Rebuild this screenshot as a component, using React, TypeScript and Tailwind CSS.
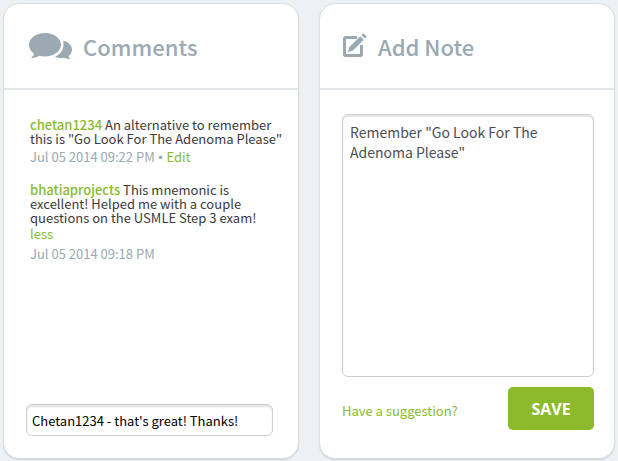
import type { ReactNode } from "react";

type Comment = {
  author: string;
  body: string;
  date: string;
  expanded?: boolean;
  editable?: boolean;
};

const comments: Comment[] = [
  {
    author: "chetan1234",
    body: 'An alternative to remember this is "Go Look For The Adenoma Please"',
    date: "Jul 05 2014 09:22 PM",
    editable: true,
  },
  {
    author: "bhatiaprojects",
    body: "This mnemonic is excellent! Helped me with a couple questions on the USMLE Step 3 exam!",
    date: "Jul 05 2014 09:18 PM",
    expanded: true,
  },
];

function CommentsIcon() {
  return (
    <svg viewBox="-2 0 45 26" className="h-[26px] w-[45px]" fill="currentColor" aria-hidden="true">
      <path d="M16 0C24.900 0 32 5.300 32 11.800s-7.100 11.800-16 11.800c-2.100 0-4.100-.3-6-.8C7.700 24.500 5 25 2 24.900c1.800-1.300 2.900-2.500 3-4.300C1.900 18.400 0 15.300 0 11.800 0 5.300 7.100 0 16 0Z" />
      <path d="M34.200 7.800C39.400 8.900 43 12.300 43 16.500c0 2.900-1.300 4.900-3.500 6.500.1 1.200.8 2 2.200 3-2.300.1-4.300-.4-6-1.300-3.300.9-7 .4-9.700-1.200C31.500 21.300 35.600 16.800 34.200 7.800Z" />
    </svg>
  );
}

function NoteIcon() {
  return (
    <svg viewBox="0 0 24 26" className="h-[26px] w-6" fill="none" aria-hidden="true">
      <path
        d="M14 4.500H2.500a1 1 0 0 0-1 1v16a1 1 0 0 0 1 1h15a1 1 0 0 0 1-1V12"
        stroke="currentColor"
        strokeWidth="3"
      />
      <path d="M17.200 3.300l3.600 3.500L10.200 17.200l-5.400 2 1.900-5.400z" fill="currentColor" />
      <path d="M18.400 2.100l1.300-1.300q.6-.6 1.200 0l2.300 2.300q.6.600 0 1.200L21.900 5.600z" fill="currentColor" />
    </svg>
  );
}

function Card({ icon, title, children }: { icon: ReactNode; title: string; children: ReactNode }) {
  return (
    <section className="flex min-w-0 flex-1 flex-col rounded-2xl border border-[#d9dee2] bg-white shadow-[0_1px_1px_#cdd3d7]">
      <header className="flex h-[86px] items-center gap-[11px] border-b-2 border-[#e3e6e9] px-[23px] text-[#9aa9b2]">
        {icon}
        <h2 className="text-[22px] font-medium">{title}</h2>
      </header>
      {children}
    </section>
  );
}

function CommentItem({ comment }: { comment: Comment }) {
  return (
    <li>
      <p className="leading-[14px] text-[#3b3b3b]">
        <a href="#profile" className="font-medium text-[#8bba2b]">
          {comment.author}
        </a>{" "}
        {comment.body}
      </p>
      {comment.expanded && (
        <button type="button" className="block leading-[18px] text-[#8bba2b]">
          less
        </button>
      )}
      <p className="mt-px leading-5 text-[#9aa9b2]">
        {comment.date}
        {comment.editable && (
          <>
            <span className="font-['Liberation_Sans',sans-serif]"> • </span>
            <a href="#edit" className="text-[#8bba2b]">
              Edit
            </a>
          </>
        )}
      </p>
    </li>
  );
}

export default function App() {
  return (
    <main className="flex min-h-screen gap-5 bg-[#edf1f4] px-[3px] pt-[3px] pb-[2px] font-['Noto_Sans_CJK_SC','Open_Sans',sans-serif] text-[13px]">
      <Card icon={<CommentsIcon />} title="Comments">
        <ul className="flex flex-col gap-[15px] pt-7 pr-3 pl-[26px]">
          {comments.map((comment) => (
            <CommentItem key={comment.author} comment={comment} />
          ))}
        </ul>
        <form className="mt-auto pr-[25px] pb-[22px] pl-[22px]">
          <input
            type="text"
            aria-label="Add a comment"
            defaultValue="Chetan1234 - that's great! Thanks!"
            className="h-8 w-full rounded-md border border-[#cfcfcf] px-[5px] text-black shadow-[inset_0_2px_2px_#e2e2e2] outline-none"
          />
        </form>
      </Card>

      <Card icon={<NoteIcon />} title="Add Note">
        <form className="flex flex-1 flex-col pt-6 pr-5 pb-7 pl-[22px]">
          <textarea
            aria-label="Note"
            defaultValue={'Remember "Go Look For The Adenoma Please"'}
            className="w-full flex-1 resize-none rounded-md border border-[#cfcfcf] py-[7px] pr-10 pl-[7px] text-sm leading-5 text-[#4a4f54] shadow-[inset_0_2px_1px_#e4e4e4] outline-none"
          />
          <div className="mt-[10px] flex items-center justify-between">
            <a href="#suggestion" className="mt-1 text-[#8bba2b]">
              Have a suggestion?
            </a>
            <button
              type="submit"
              className="h-[43px] w-[86px] rounded-[5px] bg-[#8bba2b] font-['Open_Sans',sans-serif] text-base font-bold text-white"
            >
              SAVE
            </button>
          </div>
        </form>
      </Card>
    </main>
  );
}
